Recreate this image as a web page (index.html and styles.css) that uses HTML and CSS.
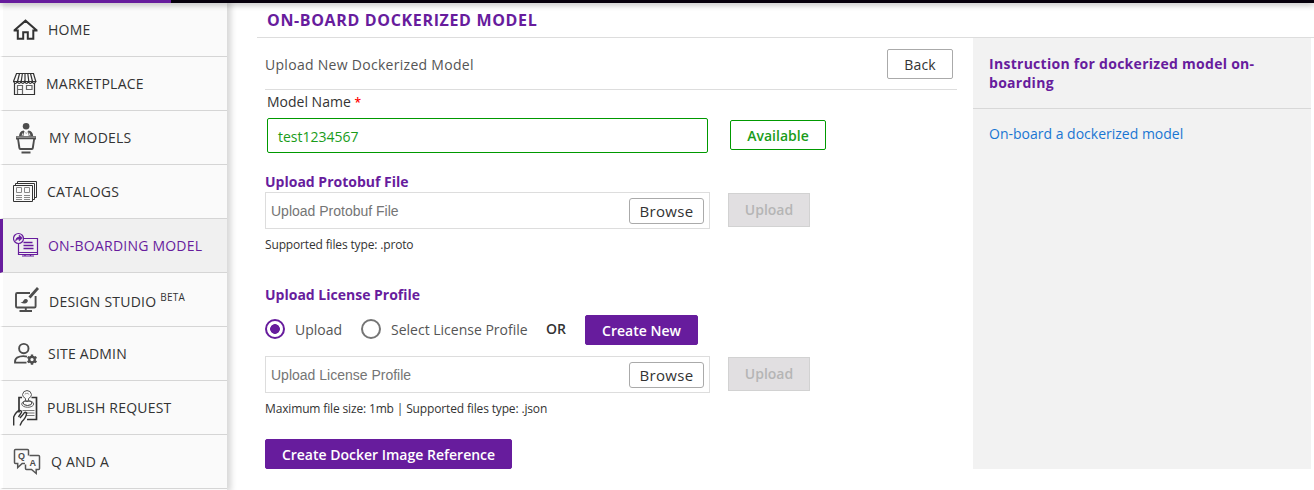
FILE: index.html
```html
<!DOCTYPE html>
<html lang="en">
<head>
<meta charset="utf-8">
<title>On-Board Dockerized Model</title>
<link rel="stylesheet" href="styles.css">
</head>
<body>
<div class="topbar"><div class="topbar-brand"></div></div>
<div class="layout">
  <nav class="sidebar">
    <a class="nav-item nav-home">
      <svg class="icon" width="26" height="38" viewBox="0 0 26 38" fill="none" stroke="#333" stroke-width="2"><path d="M1.2 19.6 12.5 9.7 23.8 19.6M0.6 19.4h4.2v8.4h5.4v-6.6h4.6v6.6h5.5v-8.4h4.2"/></svg>
      <span>HOME</span></a>
    <a class="nav-item nav-market">
      <svg class="icon" width="26" height="38" viewBox="0 0 26 38" fill="none" stroke="#333" stroke-width="1.2"><path d="M3.5 8.5h17l2.3 8H.5zM6.5 8.5l-2 8M9.4 8.5l-1.2 8M12 8.5v8M14.8 8.5l1 8M17.5 8.5l2 8"/><path d="M.6 16.5q1.8 4 3.7 0 1.9 4 3.7 0 1.9 4 3.7 0 1.9 4 3.7 0 1.9 4 3.7 0 1.9 4 3.7 0M1.5 18.5v11h20v-11"/><path d="M4.5 29V20.5h5V29M4.5 24.5h5M13.5 20.5h5.5v4h-5.5z" stroke="#666"/></svg>
      <span>MARKETPLACE</span></a>
    <a class="nav-item nav-models">
      <svg class="icon" width="26" height="38" viewBox="0 0 26 38" fill="#4d4d4d"><circle cx="13.1" cy="7.3" r="3.3"/><path d="M6 17.2q.3-5.1 4.7-5.7l2.400 3 2.400-3q4.400.6 4.700 5.700z"/><path d="m11.200 12.500 2 2.200 1.900-2.200.7 4.700h-5.300z" fill="#fafafa"/><path d="M8.500 16.500l1.500-3 .5 3zM17.700 16.500l-1.500-3-.5 3z" fill="#ddd"/><path d="M3 17.200h20v3.300h-1L20.800 29q-.2 2-2 2H7.400q-1.800 0-2-2L4.200 20.500H3z"/><path d="M6 20.300h14.200l-1.400 8.800H7.400z" fill="#fafafa"/><path d="M3.500 17.800h19v1h-19z" fill="#999"/><path d="M8.500 32.500h9v2h-9z"/></svg>
      <span>MY MODELS</span></a>
    <a class="nav-item nav-catalogs">
      <svg class="icon" width="26" height="38" viewBox="0 0 26 38" fill="none" stroke="#333"><path d="M.5 12.500h19v16H.5zM2.500 12.500v-2h19v16h-2M4.500 10.500v-2h19v16h-2"/><path d="M3.500 14.500h5v5h-5zM11.500 14.500h5v5h-5zM3 22.500h6M3 24.500h6M3 26.500h6M11 22.500h6M11 24.500h6M11 26.500h6" stroke="#888"/></svg>
      <span>CATALOGS</span></a>
    <a class="nav-item nav-onboard active">
      <svg class="icon" width="26" height="38" viewBox="0 0 26 38" fill="none" stroke="#671c9d" stroke-width="1.200"><path d="M10.500 11.500h14v16h-19v-11"/><circle cx="5.500" cy="11.500" r="5"/><path d="M2.500 14q.3-3.700 3.700-3.900V8l3.200 3-3.200 2.900V12q-2.200-.1-3.700 2z" fill="#671c9d" stroke-width=".6"/><path d="M10.500 15.500h9M10.500 18.500h10M10.500 21.500h10" stroke-width="1.700"/><path d="M5 25.500h19.500M12 27v2.500M17.500 27v2.500M9 29h12"/></svg>
      <span>ON-BOARDING MODEL</span></a>
    <a class="nav-item nav-design">
      <svg class="icon" width="26" height="38" viewBox="0 0 26 38" fill="none" stroke="#4d4d4d" stroke-width="1.900"><path d="M17 12H4.200q-1.200 0-1.200 1.200v12q0 1.300 1.200 1.300h17.200q1.200 0 1.200-1.300V15"/><path d="m25 7-8.500 9.500" stroke-width="2.800"/><path d="M7.500 21.500q2.500 0 3-2 1.200-2 3.500-1.300 1.800 1.300.3 3-2 2.400-6.800.3z" fill="#4d4d4d" stroke="none"/><path d="M12.800 27v3M6.500 30h12.500"/></svg>
      <span>DESIGN STUDIO <small class="beta">BETA</small></span></a>
    <a class="nav-item nav-admin">
      <svg class="icon" width="26" height="38" viewBox="0 0 26 38" fill="none" stroke="#4d4d4d" stroke-width="1.900"><circle cx="10.800" cy="13.600" r="4.700"/><path d="M14 21.600Q8.500 20.300 4 22.700q-2.200 1.400-2 4.900h11.500"/><circle cx="19" cy="24.600" r="2.800" stroke-width="2.300"/><path d="M19 19.500v1.700M19 28v1.700M14.600 22l1.500.9M21.900 26.300l1.500.9M14.600 27.200l1.500-.9M21.900 22.900l1.500-.9" stroke-width="2.400"/></svg>
      <span>SITE ADMIN</span></a>
    <a class="nav-item nav-publish">
      <svg class="icon" width="26" height="38" viewBox="0 0 26 38" fill="none" stroke="#333"><path d="M9 8.500H6v15M18.500 8.500h5v22H14" stroke-width="1.700"/><path d="M12.500 9.500Q9.500 8 9.500 5.500q.5-3.700 4.500-4 4 .3 4.500 4 0 2.500-3 4v3h-3z" fill="#fafafa" stroke="#555"/><path d="M12 5.500q.3-2 1.700-1 1.600-1 2 1" stroke="#999"/><path d="M12 12q-2 .3-2 2 .3 2.200 4.500 2.500 4.500-.3 4.500-2.500 0-1.700-3-2"/><ellipse cx="14.700" cy="15" rx="6" ry="3.300" stroke="#666"/><path d="M9.500 21.500h12M12 24h9.500M13 26.500h8.500" stroke="#777"/><path d="M.7 36.500V28Q3 22.500 6.500 21.500q2.500 0 2 2L5.500 28M7 36.500l2-4q4-3.500 4.700-8.500-2.200-1.800-3.200 1L7 29" stroke-width="1.400"/></svg>
      <span>PUBLISH REQUEST</span></a>
    <a class="nav-item nav-qa">
      <svg class="icon" width="28" height="38" viewBox="0 0 28 38" fill="none" stroke="#555" stroke-width="1.500"><path d="M15.500 12.500V7.500q0-1-1-1H2.500q-1 0-1 1v12q0 1 1 1h2.200v4l4.500-4h2.800"/><path d="M16.500 12.500h9q1 0 1 1v12q0 1-1 1h-2.300v4l-4.700-4h-5q-1 0-1-1v-4"/><text class="glyph" x="5" y="15.500">Q</text><text class="glyph" x="16.500" y="23">A</text></svg>
      <span>Q AND A</span></a>
  </nav>
  <main class="main">
    <h1 class="title">ON-BOARD DOCKERIZED MODEL</h1>
    <div class="columns">
      <section class="content">
        <header class="subhead"><h2>Upload New Dockerized Model</h2><button class="btn btn-back">Back</button></header>
        <label class="name-label">Model Name <span class="required">*</span></label>
        <div class="name-row"><div class="name-input">test1234567</div><button class="btn btn-available">Available</button></div>
        <h3 class="section-title proto-title">Upload Protobuf File</h3>
        <div class="file-row"><div class="file-box"><span>Upload Protobuf File</span><button class="btn btn-browse">Browse</button></div><button class="btn btn-upload" disabled>Upload</button></div>
        <p class="hint">Supported files type: .proto</p>
        <h3 class="section-title license-title">Upload License Profile</h3>
        <div class="options">
          <span class="radio checked"></span><span class="radio-label first">Upload</span>
          <span class="radio"></span><span class="radio-label second">Select License Profile</span>
          <b class="or">OR</b><button class="btn btn-primary btn-new">Create New</button>
        </div>
        <div class="file-row"><div class="file-box"><span>Upload License Profile</span><button class="btn btn-browse">Browse</button></div><button class="btn btn-upload" disabled>Upload</button></div>
        <p class="hint license-hint">Maximum file size: 1mb | Supported files type: .json</p>
        <button class="btn btn-primary btn-create">Create Docker Image Reference</button>
      </section>
      <aside class="instructions">
        <h2>Instruction for dockerized model on-boarding</h2>
        <a>On-board a dockerized model</a>
      </aside>
    </div>
  </main>
</div>
</body>
</html>
```

FILE: styles.css
```css
* { box-sizing: border-box; }
body { margin: 0; height: 490px; overflow: hidden; background: #fff; color: #333; font-family: "Open Sans", "Noto Sans", sans-serif; font-size: 14px; }
h1, h2, h3, p { margin: 0; }
.topbar { position: relative; z-index: 2; height: 3px; background: #06000c; box-shadow: 0 1px 6px rgba(0,0,0,.45); }
.topbar-brand { width: 171px; height: 3px; background: #671c9d; }
.layout { display: flex; height: 487px; }
.sidebar { width: 227px; flex: none; background: #fafafa; box-shadow: 2px 0 6px 2px rgba(0,0,0,.16); }
.nav-item { display: flex; align-items: center; height: 54px; padding-left: 10px; border-left: 3px solid #fff; border-bottom: 1px solid #d5d5d5; font-weight: 500; line-height: 20px; letter-spacing: .22px; white-space: nowrap; }
.nav-item span { margin-top: 1px; }
.icon { flex: none; margin-right: 9px; }
.nav-market .icon { margin-right: 7px; }
.nav-catalogs .icon, .nav-publish .icon { margin-right: 8px; }
.nav-models .icon, .nav-design .icon, .nav-qa .icon { margin-right: 10px; }
.active { background: #f0f0f0; border-left-color: #671c9d; color: #671c9d; }
.nav-design span { margin-top: 4px; }
.beta { font-size: 10px; font-weight: 500; line-height: 0; vertical-align: 6px; letter-spacing: .3px; }
.glyph { font: bold 9px "Liberation Sans", sans-serif; fill: #4d4d4d; stroke: none; }
.main { flex: 1; padding-left: 30px; }
.title { height: 35px; padding-left: 10px; border-bottom: 1px solid #ddd; color: #671c9d; font-size: 16px; font-weight: 700; line-height: 34px; letter-spacing: .65px; }
.columns { display: flex; }
.content { width: 716px; padding-left: 8px; }
.subhead { display: flex; justify-content: space-between; align-items: center; width: 692px; height: 52px; padding-right: 4px; border-bottom: 1px solid #ddd; }
.subhead h2 { margin-top: 2px; color: #555; font-size: 14px; font-weight: 400; letter-spacing: .29px; }
.btn { display: block; padding: 0; border: 1px solid #aaa; border-radius: 2px; background: #fff; color: #333; font: 600 14px/20px "Open Sans", sans-serif; text-align: center; }
.btn-back { width: 66px; height: 30px; padding-top: 2px; font-weight: 500; letter-spacing: .2px; }
.name-label { display: block; height: 28px; padding-left: 2px; line-height: 24px; }
.required { color: red; font-size: 12px; font-weight: 600; }
.name-row { display: flex; gap: 22px; height: 35px; padding-left: 2px; }
.name-input { width: 441px; height: 35px; padding-left: 10px; border: 1px solid #090; border-radius: 2px; color: #1a9c1a; line-height: 36px; }
.btn-available { width: 96px; height: 30px; margin-top: 2px; padding-top: 1px; border-color: #090; color: #1a9c1a; }
.section-title { color: #671c9d; font-size: 14px; font-weight: 700; line-height: 20px; }
.proto-title { height: 39px; padding-top: 19px; }
.file-row { display: flex; gap: 18px; height: 37px; }
.file-box { display: flex; align-items: center; justify-content: space-between; width: 445px; height: 37px; padding: 0 5px; border: 1px solid #ddd; color: #757575; font: 14px "Liberation Sans", Arial, sans-serif; }
.btn-browse { width: 75px; height: 26px; border-radius: 3px; font-size: 15px; font-weight: 500; letter-spacing: .3px; }
.btn-upload { width: 82px; height: 34px; margin-top: 1px; border-color: #d2d2d2; border-radius: 0; background: #e1dfe1; color: #b5b5b5; }
.hint { height: 56px; padding-top: 7px; font-size: 12px; line-height: 18px; letter-spacing: -.15px; }
.license-title { height: 30px; }
.options { display: flex; height: 41px; line-height: 30px; }
.radio { flex: none; width: 20px; height: 20px; margin-top: 4px; border: 2px solid #757575; border-radius: 50%; }
.checked { border-color: #671c9d; background: radial-gradient(circle, #671c9d 4.5px, transparent 5.2px); }
.radio-label { padding-left: 10px; color: #555; white-space: nowrap; }
.first { width: 76px; }
.second { width: 165px; }
.or { width: 39px; line-height: 28px; font-size: 14px; font-weight: 600; }
.btn-primary { padding-top: 2px; border-color: #671c9d; background: #671c9d; color: #fff; }
.btn-new { width: 113px; height: 30px; }
.license-hint { height: 46px; }
.btn-create { width: 247px; height: 30px; }
.instructions { width: 338px; height: 431px; background: #f2f2f2; }
.instructions h2 { height: 71px; padding: 16px 16px 0; border-bottom: 1px solid #d8d8d8; color: #671c9d; font-size: 14px; font-weight: 700; line-height: 19px; letter-spacing: .28px; }
.instructions a { display: block; padding: 15px 16px; color: #1976d2; line-height: 20px; }
```
